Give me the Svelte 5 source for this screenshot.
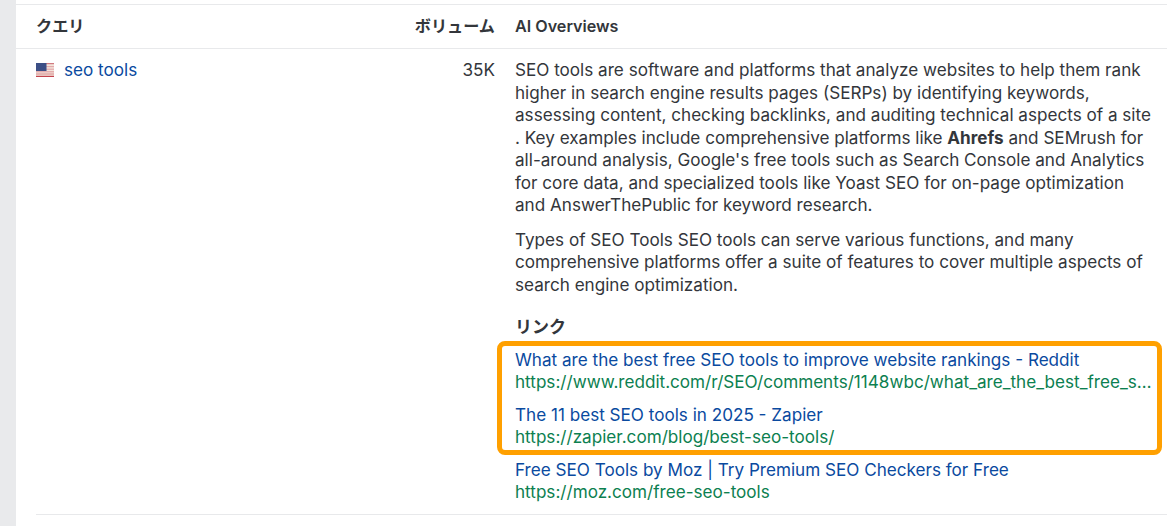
<script>
  const links = [
    { title: 'What are the best free SEO tools to improve website rankings - Reddit', url: 'https://www.reddit.com/r/SEO/comments/1148wbc/what_are_the_best_free_seo_tools_to_improve_website_rankings/' },
    { title: 'The 11 best SEO tools in 2025 - Zapier', url: 'https://zapier.com/blog/best-seo-tools/' },
    { title: 'Free SEO Tools by Moz | Try Premium SEO Checkers for Free', url: 'https://moz.com/free-seo-tools' }
  ];
</script>

<div class="page">
  <div class="panel">
    <div class="row head">
      <div class="query">クエリ</div>
      <div class="volume">ボリューム</div>
      <div class="overview">AI Overviews</div>
    </div>
    <div class="row body">
      <div class="query">
        <svg class="flag" viewBox="0 0 18 14" aria-hidden="true">
          <rect width="18" height="14" fill="#f3e4da" />
          <rect y="0" width="18" height="1.2" fill="#d07a80" />
          <rect y="3" width="18" height="1.2" fill="#e2aaac" />
          <rect y="5.6" width="18" height="1.2" fill="#e2aaac" />
          <rect y="8.2" width="18" height="1.2" fill="#e0a0a4" />
          <rect y="10.4" width="18" height="1.2" fill="#dc9a9c" />
          <rect y="12.8" width="18" height="1.2" fill="#c4444e" />
          <rect width="10.5" height="8" fill="#3c4f86" />
        </svg>
        <a href="#q">seo tools</a>
      </div>
      <div class="volume">35K</div>
      <div class="overview">
        <p>SEO tools are software and platforms that analyze websites to help them rank higher in search engine results pages (SERPs) by identifying keywords, assessing content, checking backlinks, and auditing technical aspects of a site<br />. Key examples include comprehensive platforms like <b>Ahrefs</b> and SEMrush for all-around analysis, Google's free tools such as Search Console and Analytics for core data, and specialized tools like Yoast SEO for on-page optimization and AnswerThePublic for keyword research.</p>
        <p>Types of SEO Tools SEO tools can serve various functions, and many comprehensive platforms offer a suite of features to cover multiple aspects of search engine optimization.</p>
        <h4>リンク</h4>
        <div class="links">
          <div class="highlight"></div>
          {#each links as link}
            <div class="link">
              <a class="title" href="#l">{link.title}</a>
              <a class="url" href="#l">{link.url}</a>
            </div>
          {/each}
        </div>
      </div>
    </div>
  </div>
</div>

<style>
  :global(body) {
    margin: 0;
    background: #e9eaec;
  }

  .page {
    height: 526px;
    padding-left: 16px;
    overflow: hidden;
    font-family: Inter, "Noto Sans CJK JP", sans-serif;
    font-size: 17.13px;
    line-height: 22.5px;
    color: #33363b;
  }

  .panel {
    height: 526px;
    box-sizing: border-box;
    padding-top: 4px;
    background: #fff;
  }

  .row {
    display: grid;
    grid-template-columns: 319px 120px minmax(0, 1fr);
    column-gap: 20px;
  }

  .head {
    height: 43px;
    align-items: center;
    padding: 0 14px 0 20px;
    border-top: 1px solid #e8e9eb;
    border-bottom: 1px solid #e8e9eb;
    font-size: 16.15px;
    font-weight: 600;
  }

  .body {
    margin-left: 20px;
    padding: 10px 14px 0 0;
    border-bottom: 1px solid #e8e9eb;
  }

  .query {
    display: flex;
    align-items: flex-start;
  }

  .flag {
    width: 18px;
    height: 14px;
    margin: 4px 10px 0 0;
  }

  .volume {
    text-align: right;
  }

  a {
    color: #0a4a9f;
    text-decoration: none;
  }

  p {
    margin: 0 0 12px;
  }

  h4 {
    margin: 20px 0 10px;
    font-size: 17px;
    font-weight: 600;
    line-height: 22.5px;
  }

  .links {
    position: relative;
  }

  .highlight {
    position: absolute;
    left: -18px;
    top: -8px;
    width: 665px;
    height: 114px;
    box-sizing: border-box;
    border: 5px solid #ffa000;
    border-radius: 8px;
  }

  .link {
    display: flex;
    flex-direction: column;
    margin-bottom: 10px;
  }

  .title,
  .url {
    white-space: nowrap;
    overflow: hidden;
    text-overflow: ellipsis;
  }

  .url {
    color: #0c8050;
  }
</style>
